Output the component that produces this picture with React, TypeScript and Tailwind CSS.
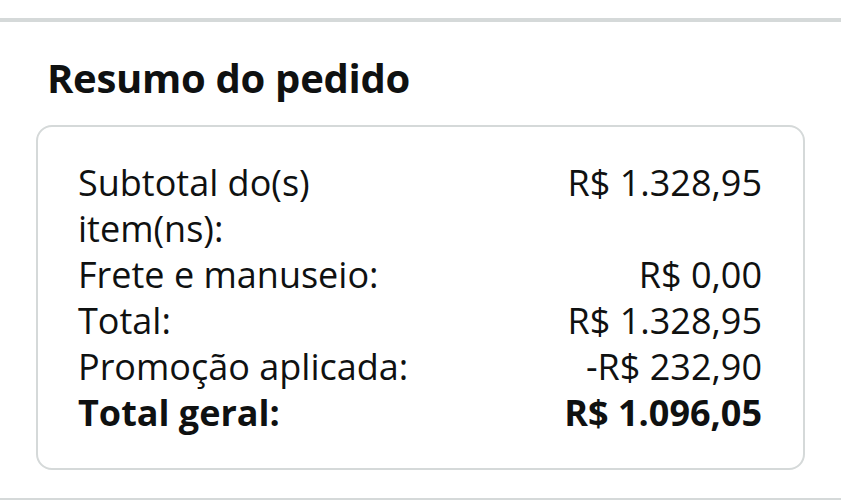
export default function App() {
  const rows = [
    { label: "Subtotal do(s) item(ns):", value: "R$ 1.328,95" },
    { label: "Frete e manuseio:", value: "R$ 0,00" },
    { label: "Total:", value: "R$ 1.328,95" },
    { label: "Promoção aplicada:", value: "-R$ 232,90" },
    { label: "Total geral:", value: "R$ 1.096,05", bold: true },
  ];

  return (
    <div
      className="h-[500px] w-[841px] overflow-hidden bg-white text-[#0f1111]"
      style={{ fontFamily: '"Open Sans", "Noto Sans", sans-serif' }}
    >
      <div className="mt-[18px] h-[4px] bg-[#d5d9d9]" />
      <div className="px-[36px] pt-[32px]">
        <h2 className="pl-[11px] text-[40px] leading-[48px] font-bold tracking-[-0.3px]">
          Resumo do pedido
        </h2>
        <div className="mt-[23px] rounded-[16px] border-2 border-[#d5d9d9] pt-[33px] pr-[41px] pb-[32px] pl-[40px]">
          {rows.map((r) => (
            <div
              key={r.label}
              className={`flex justify-between text-[36px] leading-[46px] ${r.bold ? "font-bold" : ""}`}
            >
              <span className="w-[350px]">{r.label}</span>
              <span className="text-right">{r.value}</span>
            </div>
          ))}
        </div>
      </div>
      <div className="mt-[28px] h-[3px] bg-[#d5d9d9]" />
    </div>
  );
}
